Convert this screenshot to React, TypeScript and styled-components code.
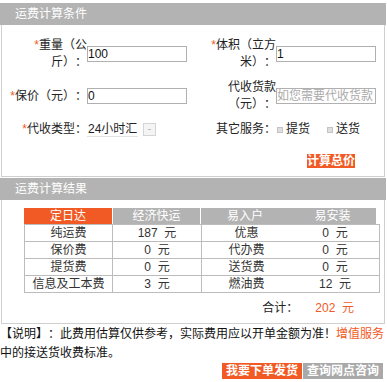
import React from "react";
import styled, { createGlobalStyle } from "styled-components";

const GlobalStyle = createGlobalStyle`
  html, body { margin: 0; padding: 0; background: #fff; }
  body {
    font-family: "Liberation Sans", "Noto Sans CJK SC", sans-serif;
    font-size: 12px;
    color: #222;
    text-spacing-trim: space-all;
  }
  * { text-spacing-trim: space-all; }
`;

const ORANGE = "#f15a24";
const GRAY = "#b3b3b3";

const Page = styled.div`
  width: 386px;
  padding-top: 3px;
`;

const Panel = styled.section<{ $mt?: number }>`
  display: flex;
  flex-direction: column;
  margin-top: ${(p) => p.$mt ?? 0}px;
`;

const PanelHeader = styled.div`
  height: 22px;
  line-height: 22px;
  background: ${GRAY};
  color: #fff;
  padding-left: 15px;
  font-size: 12px;
`;

const PanelBody = styled.div<{ $pt: number; $pb: number }>`
  margin: 0 1px;
  border: 1px solid #cfcfcf;
  border-top: none;
  padding: ${(p) => p.$pt}px 0 ${(p) => p.$pb}px 0;
`;

const FormGrid = styled.div`
  display: grid;
  grid-template-columns: 85px 113px 76px 1fr;
  row-gap: 8px;
  align-items: center;
  line-height: 17px;
`;

const Label = styled.div`
  text-align: right;
  line-height: 17px;
`;

const Star = styled.span`
  color: ${ORANGE};
`;

const TextInput = styled.input`
  box-sizing: border-box;
  width: 100px;
  height: 16px;
  border: 1px solid #b0b0b0;
  padding: 0;
  margin: 0;
  font-family: "Liberation Sans", "Noto Sans CJK SC", sans-serif;
  font-size: 12px;
  color: #111;
  outline: none;
  &::placeholder {
    color: #aaa;
  }
`;

const SelectBox = styled.div`
  display: flex;
  align-items: center;
  width: 69px;
  height: 13px;
`;

const SelectText = styled.span`
  flex: 1;
  line-height: 13px;
  border-bottom: 1px solid #e2e2e2;
  padding-left: 1px;
`;

const SelectArrow = styled.span`
  box-sizing: border-box;
  width: 13px;
  height: 13px;
  margin-left: 5px;
  border: 1px solid #d4d4d4;
  background: #f4f4f4;
  display: flex;
  align-items: center;
  justify-content: center;
  &::after {
    content: "";
    width: 3px;
    height: 1px;
    background: #bbb;
  }
`;

const Services = styled.div`
  display: flex;
  align-items: center;
`;

const Check = styled.label<{ $ml: number }>`
  display: flex;
  align-items: center;
  gap: 3px;
  margin-left: ${(p) => p.$ml}px;
`;

const Box = styled.span`
  box-sizing: border-box;
  width: 6px;
  height: 6px;
  border: 1px solid #c4c4c4;
  background: #dedede;
`;

const SubmitRow = styled.div`
  display: flex;
  justify-content: flex-end;
  padding-right: 29px;
  margin-top: 16px;
`;

const OrangeBtn = styled.button`
  border: none;
  background: ${ORANGE};
  color: #fff;
  font-family: "Liberation Sans", "Noto Sans CJK SC", sans-serif;
  font-weight: bold;
  font-size: 12px;
  line-height: 14px;
  height: 14px;
  padding: 0;
  cursor: pointer;
`;

const Table = styled.div`
  margin-left: 22px;
  width: 356px;
`;

const HeadRow = styled.div`
  display: grid;
  grid-template-columns: 89px 88px 88px 87px;
  height: 16px;
`;

const HeadCell = styled.div<{ $bg: string; $sep?: boolean }>`
  box-sizing: border-box;
  background: ${(p) => p.$bg};
  color: #fff;
  text-align: center;
  line-height: 16px;
  border-right: ${(p) => (p.$sep ? "1px solid #fff" : "none")};
`;

const BodyRows = styled.div`
  border: 1px solid #bcbcbc;
  border-bottom: none;
`;

const Row = styled.div`
  display: grid;
  grid-template-columns: 88px 89px 89px 1fr;
  height: 17px;
  border-bottom: 1px solid #bcbcbc;
  box-sizing: border-box;
`;

const Cell = styled.div<{ $line?: boolean }>`
  text-align: center;
  line-height: 16px;
  color: #333;
  border-right: ${(p) => (p.$line ? "1px solid #bcbcbc" : "none")};
`;

const TotalRow = styled.div`
  display: flex;
  justify-content: flex-end;
  gap: 17px;
  padding-right: 30px;
  margin-top: 7px;
  line-height: 17px;
`;

const Red = styled.span`
  color: ${ORANGE};
`;

const Note = styled.p`
  margin: 1px 0 0 0;
  line-height: 19px;
  color: #111;
`;

const Link = styled.a`
  color: ${ORANGE};
  text-decoration: none;
`;

const ActionBar = styled.div`
  display: flex;
  justify-content: flex-end;
  padding-right: 3px;
`;

const ActionBtn = styled.button<{ $bg: string }>`
  border: none;
  background: ${(p) => p.$bg};
  color: #fff;
  font-family: "Liberation Sans", "Noto Sans CJK SC", sans-serif;
  font-weight: bold;
  font-size: 12px;
  height: 16px;
  line-height: 16px;
  padding: 0 4px;
  margin-left: 1px;
  cursor: pointer;
`;

const rows = [
  ["纯运费", "187", "优惠", "0"],
  ["保价费", "0", "代办费", "0"],
  ["提货费", "0", "送货费", "0"],
  ["信息及工本费", "3", "燃油费", "12"],
];

const NB = "\u00a0\u00a0";

export default function App() {
  return (
    <>
      <GlobalStyle />
      <Page>
        <Panel>
          <PanelHeader>运费计算条件</PanelHeader>
          <PanelBody $pt={12} $pb={8}>
            <FormGrid>
              <Label>
                <Star>*</Star>重量（公斤）：
              </Label>
              <TextInput defaultValue="100" />
              <Label>
                <Star>*</Star>体积（立方米）：
              </Label>
              <TextInput defaultValue="1" />

              <Label>
                <Star>*</Star>保价（元）：
              </Label>
              <TextInput defaultValue="0" />
              <Label>代收货款（元）：</Label>
              <TextInput placeholder="如您需要代收货款" />

              <Label>
                <Star>*</Star>代收类型：
              </Label>
              <SelectBox>
                <SelectText>24小时汇</SelectText>
                <SelectArrow />
              </SelectBox>
              <Label>其它服务：</Label>
              <Services>
                <Check $ml={1}>
                  <Box />
                  提货
                </Check>
                <Check $ml={17}>
                  <Box />
                  送货
                </Check>
              </Services>
            </FormGrid>
            <SubmitRow>
              <OrangeBtn>计算总价</OrangeBtn>
            </SubmitRow>
          </PanelBody>
        </Panel>

        <Panel $mt={1}>
          <PanelHeader>运费计算结果</PanelHeader>
          <PanelBody $pt={8} $pb={6}>
            <Table>
              <HeadRow>
                <HeadCell $bg={ORANGE} $sep>
                  定日达
                </HeadCell>
                <HeadCell $bg={GRAY} $sep>
                  经济快运
                </HeadCell>
                <HeadCell $bg={GRAY}>易入户</HeadCell>
                <HeadCell $bg={GRAY}>易安装</HeadCell>
              </HeadRow>
              <BodyRows>
                {rows.map((r) => (
                  <Row key={r[0]}>
                    <Cell $line>{r[0]}</Cell>
                    <Cell $line>
                      {r[1]}
                      {NB}元
                    </Cell>
                    <Cell>{r[2]}</Cell>
                    <Cell>
                      {r[3]}
                      {NB}元
                    </Cell>
                  </Row>
                ))}
              </BodyRows>
            </Table>
            <TotalRow>
              <span>合计：</span>
              <Red>
                202{NB}元
              </Red>
            </TotalRow>
          </PanelBody>
        </Panel>

        <Note>
          【说明】：此费用估算仅供参考，实际费用应以开单金额为准！<Link href="#">增值服务</Link>
          中的接送货收费标准。
        </Note>
        <ActionBar>
          <ActionBtn $bg={ORANGE}>我要下单发货</ActionBtn>
          <ActionBtn $bg="#a9a9a9">查询网点咨询</ActionBtn>
        </ActionBar>
      </Page>
    </>
  );
}
